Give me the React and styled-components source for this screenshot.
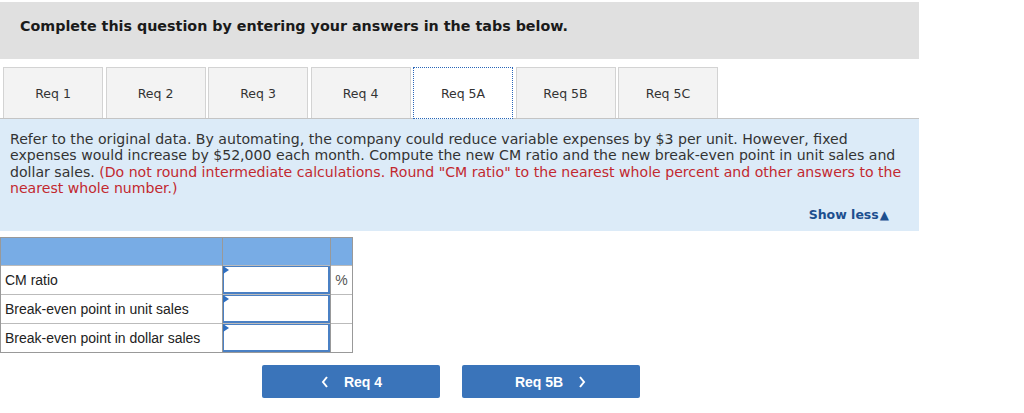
import styled, { createGlobalStyle } from "styled-components";

const GlobalStyle = createGlobalStyle`
  html, body {
    margin: 0;
    padding: 0;
    background: #fff;
  }
  body {
    font-family: "DejaVu Sans", Verdana, sans-serif;
    color: #222;
  }
`;

const tabs = ["Req 1", "Req 2", "Req 3", "Req 4", "Req 5A", "Req 5B", "Req 5C"];

const rows = [
  { label: "CM ratio", unit: "%" },
  { label: "Break-even point in unit sales", unit: "" },
  { label: "Break-even point in dollar sales", unit: "" },
];

export default function App() {
  return (
    <Page>
      <GlobalStyle />
      <Header>Complete this question by entering your answers in the tabs below.</Header>
      <TabBar>
        {tabs.map((t) => (
          <Tab key={t} $active={t === "Req 5A"}>
            {t}
          </Tab>
        ))}
      </TabBar>
      <Panel>
        <Question>
          Refer to the original data. By automating, the company could reduce variable
          expenses by $3 per unit. However, fixed expenses would increase by $52,000 each
          month. Compute the new CM ratio and the new break-even point in unit sales and
          dollar sales.{" "}
          <Red>
            (Do not round intermediate calculations. Round "CM ratio" to the nearest whole
            percent and other answers to the nearest whole number.)
          </Red>
        </Question>
        <ShowLess>
          Show less<span>▲</span>
        </ShowLess>
      </Panel>
      <AnswerTable>
        <tbody>
          <HeadRow>
            <th />
            <th />
            <th />
          </HeadRow>
          {rows.map((r) => (
            <Row key={r.label}>
              <Label>{r.label}</Label>
              <InputCell>
                <Field>
                  <Input type="text" />
                </Field>
              </InputCell>
              <Unit>{r.unit}</Unit>
            </Row>
          ))}
        </tbody>
      </AnswerTable>
      <NavRow>
        <NavButton>
          <Chevron viewBox="0 0 10 14">
            <path d="M7 2 L3 7 L7 12" />
          </Chevron>
          Req 4
        </NavButton>
        <NavButton>
          Req 5B
          <Chevron viewBox="0 0 10 14">
            <path d="M3 2 L7 7 L3 12" />
          </Chevron>
        </NavButton>
      </NavRow>
    </Page>
  );
}

const Page = styled.div`
  width: 919px;
  padding-top: 2px;
`;

const Header = styled.div`
  height: 57px;
  box-sizing: border-box;
  background: #e0e0e0;
  padding: 16px 0 0 20px;
  font-size: 14.3px;
  font-weight: bold;
  color: #1a1a1a;
`;

const TabBar = styled.div`
  display: flex;
  gap: 2.5px;
  margin-top: 8px;
  padding-left: 3px;
  height: 51px;
`;

const Tab = styled.div`
  width: 100px;
  box-sizing: border-box;
  display: flex;
  align-items: center;
  justify-content: center;
  font-size: 12.5px;
  color: #333;
  background: ${(p) => (p.$active ? "#fff" : "#f3f3f3")};
  border: ${(p) => (p.$active ? "1px dotted #2a66b8" : "1px solid #d3d3d3")};
  border-bottom: ${(p) => (p.$active ? "1px dotted #2a66b8" : "none")};
  margin-bottom: ${(p) => (p.$active ? "-1px" : "0")};
  position: relative;
  z-index: ${(p) => (p.$active ? 1 : 0)};
`;

const Panel = styled.div`
  height: 113px;
  box-sizing: border-box;
  background: #dcebf8;
  border-top: 1px solid #c4c4c4;
  padding: 12px 14px 0 10px;
  display: flex;
  flex-direction: column;
`;

const Question = styled.p`
  margin: 0;
  font-size: 14.1px;
  line-height: 16.4px;
  color: #333;
`;

const Red = styled.span`
  color: #c2282f;
`;

const ShowLess = styled.div`
  align-self: flex-end;
  margin-top: auto;
  margin-bottom: 9px;
  margin-right: 16px;
  font-size: 12.5px;
  font-weight: bold;
  color: #1d4f8f;

  span {
    font-size: 12px;
    margin-left: 1px;
  }
`;

const AnswerTable = styled.table`
  margin-top: 6px;
  border-collapse: collapse;
  font-family: "Liberation Sans", Arial, sans-serif;
  font-size: 14px;
  color: #222;

  td,
  th {
    padding: 0;
  }
`;

const HeadRow = styled.tr`
  height: 28px;
  background: #78ace5;

  th {
    border: 1px solid #999;
    border-bottom: none;
  }
  th:nth-child(1) {
    width: 221px;
  }
  th:nth-child(2) {
    width: 107px;
  }
  th:nth-child(3) {
    width: 21px;
  }
`;

const Row = styled.tr`
  height: 28px;
  border-top: 1px solid #bbb;

  &:last-child {
    border-bottom: 1px solid #999;
  }
`;

const Label = styled.td`
  padding-left: 4px !important;
  border-left: 1px solid #999;
`;

const InputCell = styled.td`
  border-left: 1px solid #999;
  border-right: 1px solid #999;
  vertical-align: top;
`;

const Field = styled.div`
  position: relative;
  height: 28px;
  box-sizing: border-box;
  border-style: solid;
  border-width: 1px 2px 2px 1px;
  border-color: #4a80c4;
  background: #fff;

  &::before {
    content: "";
    position: absolute;
    left: -1px;
    top: -1px;
    border-top: 4px solid transparent;
    border-bottom: 4px solid transparent;
    border-left: 6px solid #2f6fc0;
  }
`;

const Input = styled.input`
  all: unset;
  width: 100%;
  height: 100%;
`;

const Unit = styled.td`
  border-right: 1px solid #999;
  text-align: center;
  color: #555;
  font-size: 14px;
`;

const NavRow = styled.div`
  display: flex;
  gap: 22px;
  margin-top: 12px;
  padding-left: 262px;
`;

const NavButton = styled.button`
  all: unset;
  width: 178px;
  height: 33px;
  box-sizing: border-box;
  display: flex;
  align-items: center;
  justify-content: center;
  gap: 14px;
  background: #3a74ba;
  border-radius: 2px;
  color: #fff;
  font-family: "Liberation Sans", Arial, sans-serif;
  font-size: 14px;
  font-weight: bold;
  cursor: pointer;
`;

const Chevron = styled.svg`
  width: 10px;
  height: 14px;
  fill: none;
  stroke: #fff;
  stroke-width: 2;
`;
